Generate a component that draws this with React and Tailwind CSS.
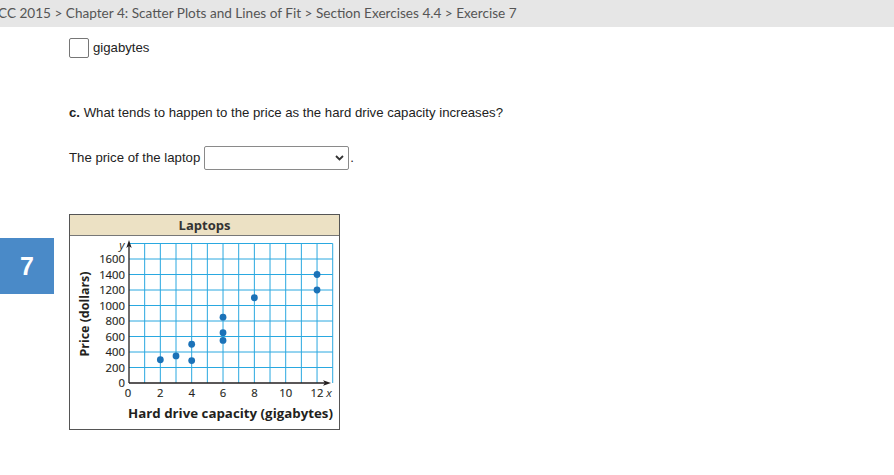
import React from "react";

const GRID = "#2aa8e0";
const DOT = "#1b72b8";
const X0 = 129;
const Y0 = 383;
const UX = 15.67;
const UY = 15.5;

const points = [
  [2, 300], [3, 350], [4, 500], [4, 290], [6, 850], [6, 650], [6, 550], [8, 1100], [12, 1400], [12, 1200],
];

function Chart() {
  const vx = [];
  for (let i = 1; i <= 13; i++) vx.push(X0 + UX * i);
  const hy = [];
  for (let j = 1; j <= 9; j++) hy.push(Y0 - UY * j);
  const right = X0 + UX * 13;
  const top = Y0 - UY * 9;
  return (
    <svg width="269" height="193" viewBox="70 236 269 193" className="block">
      {vx.map((x, i) => (
        <line key={"v" + i} x1={x} y1={top} x2={x} y2={Y0} stroke={GRID} strokeWidth="1" />
      ))}
      {hy.map((y, i) => (
        <line key={"h" + i} x1={X0} y1={y} x2={right} y2={y} stroke={GRID} strokeWidth="1" />
      ))}
      <line x1={X0} y1={Y0} x2={X0} y2={245} stroke="#231f20" strokeWidth="1.3" />
      <polygon points="129,240 126.3,248 129,246 131.7,248" fill="#231f20" />
      <line x1={X0} y1={Y0} x2={327} y2={Y0} stroke="#231f20" strokeWidth="1.3" />
      <polygon points="331,383 323,380.3 325,383 323,385.7" fill="#231f20" />
      {[0, 1, 2, 3, 4, 5, 6, 7, 8].map((k) => (
        <text
          key={"yl" + k}
          x="125"
          y={Y0 - UY * k + 4}
          textAnchor="end"
          fontSize="11.3"
          fontFamily="'Open Sans', sans-serif"
          fill="#231f20"
          stroke="#231f20"
          strokeWidth="0.15"
        >
          {k * 200}
        </text>
      ))}
      {[0, 2, 4, 6, 8, 10, 12].map((v) => (
        <text
          key={"xl" + v}
          x={X0 + UX * v - (v === 0 ? 1 : 0)}
          y="397"
          textAnchor="middle"
          fontSize="11.3"
          fontFamily="'Open Sans', sans-serif"
          fill="#231f20"
          stroke="#231f20"
          strokeWidth="0.15"
        >
          {v}
        </text>
      ))}
      <text x="329" y="397" textAnchor="middle" fontSize="11.5" fontStyle="italic" fontFamily="'Open Sans', sans-serif" fill="#231f20">x</text>
      <text x="122" y="249" textAnchor="middle" fontSize="11.5" fontStyle="italic" fontFamily="'Open Sans', sans-serif" fill="#231f20">y</text>
      {points.map(([px, py], i) => (
        <circle key={"p" + i} cx={X0 + UX * px} cy={Y0 - (py / 200) * UY} r="3.4" fill={DOT} />
      ))}
      <text
        x="230.5"
        y="418"
        textAnchor="middle"
        fontSize="13"
        fontWeight="bold"
        fontFamily="'Open Sans', sans-serif"
        fill="#231f20"
        textLength="205"
        lengthAdjust="spacingAndGlyphs"
      >
        Hard drive capacity (gigabytes)
      </text>
      <text
        x="0"
        y="0"
        transform="translate(89 314) rotate(-90)"
        textAnchor="middle"
        fontSize="12.5"
        fontWeight="bold"
        fontFamily="'Open Sans', sans-serif"
        fill="#231f20"
        textLength="85"
        lengthAdjust="spacingAndGlyphs"
      >
        Price (dollars)
      </text>
    </svg>
  );
}

export default function App() {
  return (
    <div className="w-[894px] h-[475px] bg-white overflow-hidden relative text-[#222]" style={{ fontFamily: "'Liberation Sans', Arial, sans-serif" }}>
      <div className="h-[27px] bg-[#e6e6e6] flex items-center overflow-hidden">
        <span className="whitespace-nowrap -ml-[2px] text-[13.6px] text-[#555] font-['Lato',sans-serif]">
          CC 2015 &gt; Chapter 4: Scatter Plots and Lines of Fit &gt; Section Exercises 4.4 &gt; Exercise 7
        </span>
      </div>

      <div className="pl-[69px] mt-[11px] flex items-center h-[20px] gap-[4px]">
        <div className="w-[20px] h-[20px] border border-[#767676] rounded-[2px] bg-white" />
        <span className="text-[13.2px] leading-[16px]">gigabytes</span>
      </div>

      <div className="pl-[69px] mt-[47px] text-[13.2px] leading-[16px]">
        <span className="font-bold">c.</span> What tends to happen to the price as the hard drive capacity increases?
      </div>

      <div className="pl-[69px] mt-[25px] flex items-center h-[24px] text-[13.2px]">
        <span className="leading-[16px] mr-[4px]">The price of the laptop</span>
        <div className="w-[145px] h-[24px] border border-[#8a8a8a] rounded-[2px] bg-white flex items-center justify-end pr-[4px]">
          <svg width="9" height="6" viewBox="0 0 9 6">
            <polyline points="1,1 4.5,4.5 8,1" fill="none" stroke="#333" strokeWidth="1.8" />
          </svg>
        </div>
        <span className="leading-[16px] ml-[1px]">.</span>
      </div>

      <div className="mt-[44px] flex items-start">
        <div className="mt-[24px] w-[54px] h-[56px] bg-[#4a8ac8] flex items-center justify-center">
          <span className="text-white text-[25px] font-bold leading-none" style={{ fontFamily: "'Liberation Sans', Arial, sans-serif" }}>7</span>
        </div>
        <div className="ml-[15px] w-[271px] h-[216px] border border-[#555] bg-white">
          <div className="h-[21px] bg-[#ece1c4] border-b border-[#777] flex items-center justify-center">
            <span className="text-[13px] font-bold text-[#333] font-['Open_Sans',sans-serif] leading-none">Laptops</span>
          </div>
          <Chart />
        </div>
      </div>
    </div>
  );
}
